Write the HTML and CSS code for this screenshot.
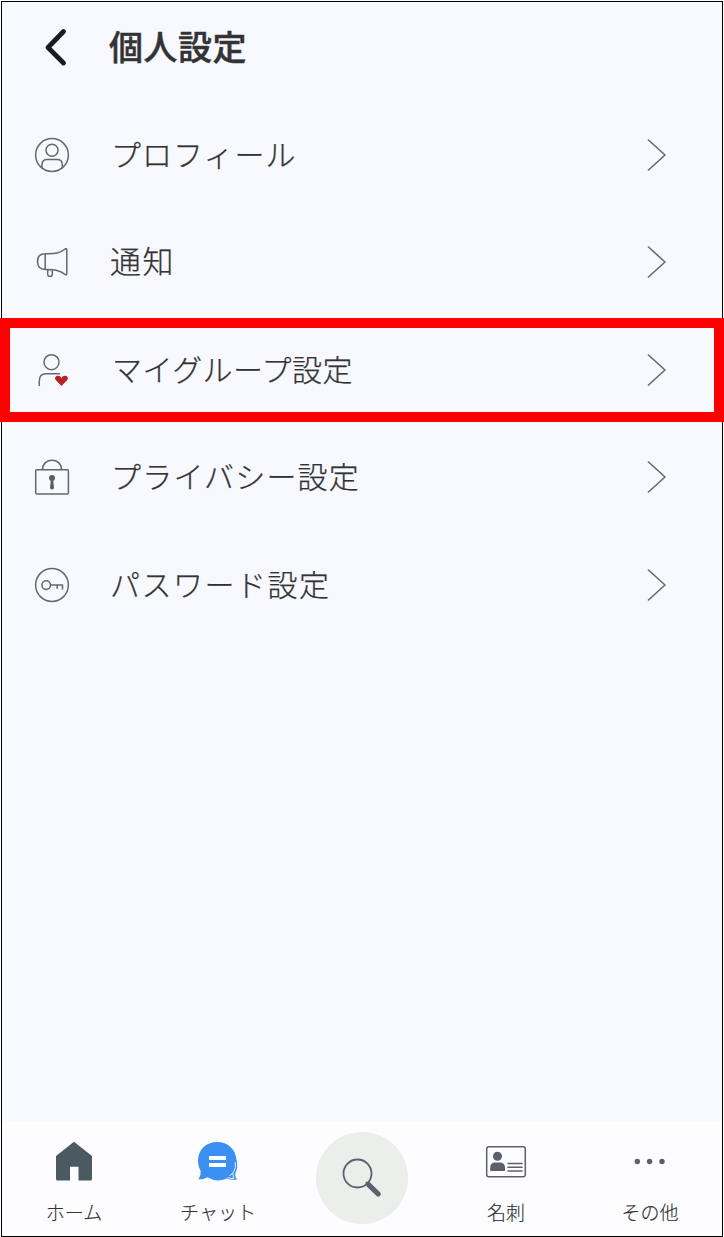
FILE: index.html
```html
<!DOCTYPE html>
<html lang="ja">
<head>
<meta charset="utf-8">
<title>個人設定</title>
<link rel="stylesheet" href="styles.css">
</head>
<body>
<div class="app">
  <header class="header">
    <svg class="back" viewBox="0 0 24 40"><path d="M20.500 4.500L5 20.500L20.500 36"/></svg>
    <h1 class="title">個人設定</h1>
  </header>
  <main class="list">
    <div class="row">
      <svg class="icon" viewBox="0 0 40 40"><circle cx="20" cy="20" r="16.400"/><circle cx="20" cy="15.200" r="6"/><path d="M10 33V29.500Q10 24.500 15.200 24.500H25Q30.300 24.500 30.300 29.500V33"/></svg>
      <span class="label profile">プロフィール</span>
      <svg class="chevron" viewBox="0 0 20 32"><path d="M1.500 1L18 16L1.500 31"/></svg>
    </div>
    <div class="row">
      <svg class="icon" viewBox="0 0 40 40"><path d="M13.200 11.800V27.500M13.200 11.800C8 11.800 5.500 15 5.500 19.600S8 27.500 13.200 27.500C21 27.800 27.500 27.500 33 32.500Q34.800 33.500 34.800 31.500V8Q34.800 6 33 7C27.500 12 21 11.500 13.200 11.800ZM15.700 27.700V32.500Q15.700 34.300 17.200 34.300H18.800Q20.300 34.300 20.300 32.500V27.800"/></svg>
      <span class="label notice">通知</span>
      <svg class="chevron" viewBox="0 0 20 32"><path d="M1.500 1L18 16L1.500 31"/></svg>
    </div>
    <div class="row">
      <svg class="icon" viewBox="0 0 40 40"><circle cx="19.500" cy="12.200" r="7.500"/><path d="M7.300 35.500V31Q7.300 23.800 14 23.800H27.500"/><path class="heart" d="M29.500 36L24.200 30.500C22 28.200 23.300 25.700 26 25.700C27.700 25.700 29 26.500 29.500 28.200C30 26.500 31.300 25.700 33 25.700C35.700 25.700 36.800 28.500 34.800 30.500Z"/></svg>
      <span class="label group">マイグループ設定</span>
      <svg class="chevron" viewBox="0 0 20 32"><path d="M1.500 1L18 16L1.500 31"/></svg>
    </div>
    <div class="row">
      <svg class="icon" viewBox="0 0 40 40"><rect x="3.700" y="12.800" width="32.700" height="24.200" rx="1.200"/><path d="M10.500 12.500C10.500 0.200 29.500 0.200 29.500 12.500"/><circle class="solid" cx="20" cy="21" r="3"/><path class="solid" d="M19 22H21L22 30.500Q22 32.400 20 32.400T18 30.500Z"/></svg>
      <span class="label privacy">プライバシー設定</span>
      <svg class="chevron" viewBox="0 0 20 32"><path d="M1.500 1L18 16L1.500 31"/></svg>
    </div>
    <div class="row">
      <svg class="icon" viewBox="0 0 40 40"><circle cx="20" cy="20" r="16.400"/><circle cx="14.200" cy="20.100" r="4.300"/><path d="M18.500 20H30.500V24M25.200 20V23.300"/></svg>
      <span class="label password">パスワード設定</span>
      <svg class="chevron" viewBox="0 0 20 32"><path d="M1.500 1L18 16L1.500 31"/></svg>
    </div>
  </main>
  <nav class="nav">
    <div class="tab">
      <svg class="tab-icon" viewBox="0 0 48 44"><path class="home" d="M24 1.700L42 16V39Q42 40.500 40.500 40.500H28.500V26.800H20V40.500H7.500Q6 40.500 6 39V16Z"/></svg>
      <span class="tab-label home-label">ホーム</span>
    </div>
    <div class="tab">
      <svg class="tab-icon" viewBox="0 0 48 44"><path class="bubble" d="M23 2C12 2 4 10 4 20.500C4 25.500 5.500 28.500 6.700 31Q7.200 35 4.500 39.500Q9.500 39.500 13.500 37.300Q23 43 32.500 38.500Q37.500 40.500 43 39.500Q40.500 36.500 41.500 32.500Q44.500 27 42.500 20C41.500 9 34 2 23 2Z"/><path class="white-line" d="M41.300 22.500Q42.500 28 39.500 32L36 35.700M34 37.700Q37 39 40 38.300Q38.700 36.500 39 33.500"/><path class="bars" d="M15 16H32V20H15ZM15 23H32V27H15Z"/></svg>
      <span class="tab-label chat-label">チャット</span>
    </div>
    <div class="tab">
      <div class="search">
        <svg class="search-icon" viewBox="0 0 44 44"><circle cx="17.500" cy="17.500" r="14"/><path class="neck" d="M27 27L29 29"/><path class="handle" d="M28.800 28.800L38.200 38"/></svg>
      </div>
    </div>
    <div class="tab">
      <svg class="tab-icon card" viewBox="0 0 48 44"><rect x="4.700" y="6.700" width="38.600" height="30" rx="2"/><circle class="fill" cx="15.500" cy="16.300" r="4.500"/><path class="fill" d="M8.200 31V28Q8.200 22.500 13 22.500H18Q23 22.500 23 28V31Z"/><path d="M26 23.500H40M26 27.300H40M26 31H40"/></svg>
      <span class="tab-label card-label">名刺</span>
    </div>
    <div class="tab">
      <svg class="tab-icon" viewBox="0 0 48 44"><g class="dots"><circle cx="11.300" cy="21.500" r="2.700"/><circle cx="23.600" cy="21.500" r="2.700"/><circle cx="36" cy="21.500" r="2.700"/></g></svg>
      <span class="tab-label other-label">その他</span>
    </div>
  </nav>
  <div class="highlight"></div>
</div>
</body>
</html>
```

FILE: styles.css
```css
* { box-sizing: border-box; }
body {
  display: flow-root;
  overflow: hidden;
  margin: 0;
  background: #fff;
  font-family: "Noto Sans CJK JP", sans-serif;
  color: #333;
}
svg { display: block; flex: none; fill: none; stroke-linecap: round; stroke-linejoin: round; }
.app {
  position: relative;
  display: flex;
  flex-direction: column;
  width: 722px;
  height: 1236px;
  margin: 1px 1px 0;
  border: 1px solid #000;
  background: #f8f9ff;
}
.header {
  display: flex;
  align-items: center;
  height: 98.750px;
  padding: 0 0 8px 41px;
}
.back { width: 24px; height: 40px; stroke: #171c20; stroke-width: 4.800; }
.title {
  margin: 0 0 2px 42px;
  font-size: 34px;
  font-weight: 500;
  line-height: 50px;
  letter-spacing: .5px;
  -webkit-text-stroke: .5px #333;
}
.list { flex: 1; }
.row {
  display: flex;
  align-items: center;
  height: 107.500px;
  padding: 0 55px 0 30px;
}
.icon { width: 40px; height: 40px; stroke: #66686e; stroke-width: 1.500; }
.heart { fill: #b8222a; stroke: none; }
.solid { fill: #5c5c60; stroke: none; }
.label {
  flex: 1;
  margin: 0 0 4px 38px;
  font-size: 30px;
  font-weight: 300;
  line-height: 44px;
  letter-spacing: 1.500px;
  white-space: nowrap;
  -webkit-text-stroke: .25px #333;
}
.profile { margin-left: 39px; letter-spacing: 1px; }
.notice { font-size: 31px; }
.group { margin-left: 40px; letter-spacing: .4px; }
.privacy { margin-left: 39px; letter-spacing: 1.200px; }
.chevron { width: 20px; height: 32px; stroke: #66686e; stroke-width: 1.600; }
.nav { display: flex; height: 115px; background: #fdfdff; }
.tab {
  display: flex;
  flex-direction: column;
  align-items: center;
  width: 144px;
  padding-top: 19px;
}
.tab-icon { width: 48px; height: 44px; }
.tab-label { margin-top: 14px; font-size: 19px; font-weight: 300; line-height: 28px; -webkit-text-stroke: .15px #333; }
.home { fill: #4b5961; }
.bubble { fill: #3990f2; }
.white-line { stroke: #fff; stroke-width: .9; }
.bars { fill: #fff; }
.search {
  display: flex;
  align-items: center;
  justify-content: center;
  width: 92px;
  height: 92px;
  margin-top: -8px;
  border-radius: 50%;
  background: #ebeeeb;
}
.search-icon { width: 44px; height: 44px; stroke: #5c606a; stroke-width: 1.800; }
.neck { stroke-width: 3; }
.handle { stroke-width: 5.200; }
.card { stroke: #5c606a; stroke-width: 1.500; }
.fill { fill: #5c606a; stroke: none; }
.dots { fill: #5c606a; }
.highlight {
  position: absolute;
  top: 316px;
  left: -2px;
  width: 724px;
  height: 104px;
  border: 10px solid #f00;
}
```
